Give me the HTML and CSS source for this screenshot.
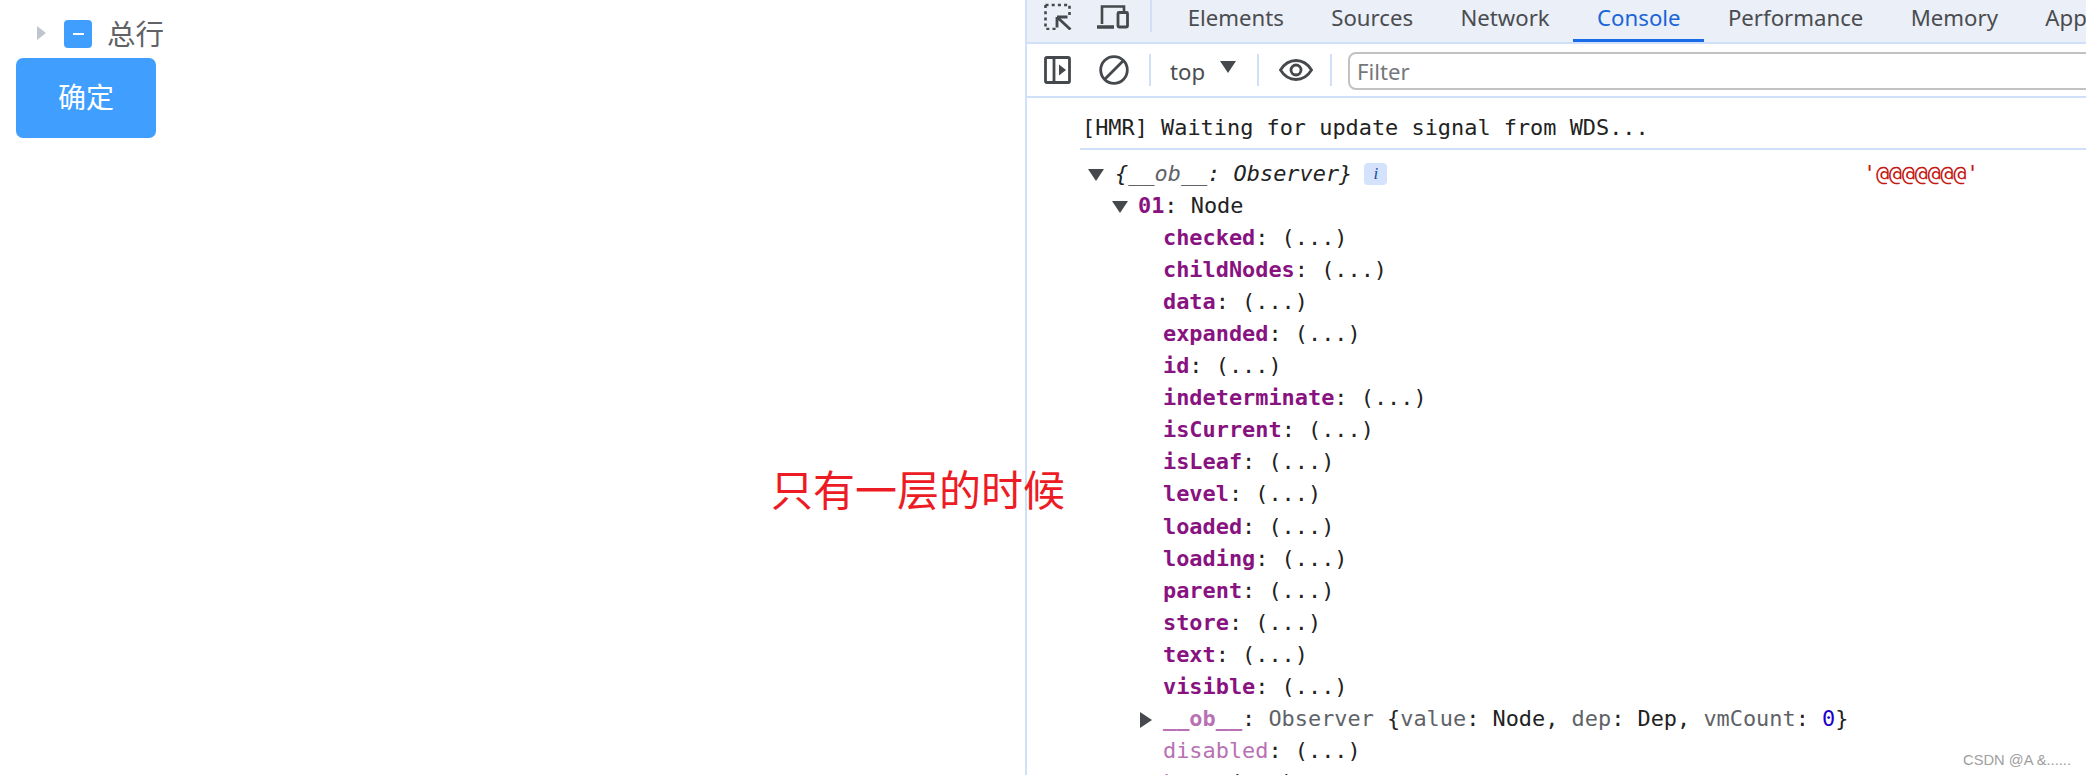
FILE: index.html
```html
<!DOCTYPE html>
<html lang="zh">
<head>
<meta charset="utf-8">
<title>Tree</title>
<link rel="stylesheet" href="styles.css">
</head>
<body>
<main class="app">
  <section class="page">
    <div class="tree-node">
      <span class="caret"></span>
      <span class="checkbox"><span class="dash"></span></span>
      <span class="tree-label">总行</span>
    </div>
    <button class="confirm">确定</button>
  </section>
  <section class="devtools">
    <nav class="tabs">
      <span class="icon-btn first">
        <svg width="28" height="28" viewBox="0 0 28 28"><rect x="1.5" y="3" width="24" height="24" fill="none" stroke="#45484c" stroke-width="2.6" stroke-dasharray="3 3.2"/><path d="M13 13h15v15h-15z" fill="#ebeff7"/><path d="M13 15h10.500M13 15v10.500M13.500 15.500l13 12" fill="none" stroke="#45484c" stroke-width="2.8"/></svg>
      </span>
      <span class="icon-btn second">
        <svg width="32" height="26" viewBox="0 0 32 26"><path d="M5 21V3.500h22V8" fill="none" stroke="#45484c" stroke-width="2.600"/><path d="M0 24h17" stroke="#45484c" stroke-width="3.500"/><rect x="21" y="9.500" width="9.500" height="14.500" rx="1" fill="none" stroke="#45484c" stroke-width="2.800"/></svg>
      </span>
      <span class="sep tab-sep"></span>
      <a class="tab">Elements</a>
      <a class="tab">Sources</a>
      <a class="tab">Network</a>
      <a class="tab active">Console</a>
      <a class="tab">Performance</a>
      <a class="tab">Memory</a>
      <a class="tab">Application</a>
    </nav>
    <div class="toolbar">
      <span class="icon-btn first">
        <svg width="28" height="28" viewBox="0 0 28 28"><rect x="1.500" y="1.500" width="24" height="25" rx="1.500" fill="none" stroke="#45484c" stroke-width="2.800"/><path d="M10 2v24" stroke="#45484c" stroke-width="2.800"/><path d="M15 8.500l7 5.500-7 5.500z" fill="#45484c"/></svg>
      </span>
      <span class="icon-btn second clear">
        <svg width="30" height="30" viewBox="0 0 30 30"><circle cx="15" cy="15" r="13.300" fill="none" stroke="#45484c" stroke-width="2.800"/><path d="M24.500 5.500l-19 19" stroke="#45484c" stroke-width="2.800"/></svg>
      </span>
      <span class="sep bar-sep"></span>
      <span class="context">top</span>
      <span class="ctx-caret"></span>
      <span class="sep ctx-sep"></span>
      <span class="eye">
        <svg width="34" height="22" viewBox="0 0 34 22"><path d="M1.500 11C5.500 4.500 11 1.500 17 1.500S28.500 4.500 32.500 11C28.500 17.500 23 20.500 17 20.500S5.500 17.500 1.500 11z" fill="none" stroke="#45484c" stroke-width="2.800"/><circle cx="17" cy="11" r="5" fill="none" stroke="#45484c" stroke-width="2.800"/></svg>
      </span>
      <span class="sep eye-sep"></span>
      <div class="filter">Filter</div>
    </div>
    <div class="console">
      <div class="message">[HMR] Waiting for update signal from WDS...</div>
      <div class="row log-head">
        <span class="arrow down"></span>
        <span class="obj"><i>{<span class="dim">__ob__</span>: Observer}</i></span>
        <span class="info">i</span>
        <span class="str">'@@@@@@@'</span>
      </div>
      <div class="row lvl1"><span class="arrow down"></span><b class="key">01</b>: Node</div>
      <div class="row lvl2"><b class="key">checked</b>: (...)</div>
      <div class="row lvl2"><b class="key">childNodes</b>: (...)</div>
      <div class="row lvl2"><b class="key">data</b>: (...)</div>
      <div class="row lvl2"><b class="key">expanded</b>: (...)</div>
      <div class="row lvl2"><b class="key">id</b>: (...)</div>
      <div class="row lvl2"><b class="key">indeterminate</b>: (...)</div>
      <div class="row lvl2"><b class="key">isCurrent</b>: (...)</div>
      <div class="row lvl2"><b class="key">isLeaf</b>: (...)</div>
      <div class="row lvl2"><b class="key">level</b>: (...)</div>
      <div class="row lvl2"><b class="key">loaded</b>: (...)</div>
      <div class="row lvl2"><b class="key">loading</b>: (...)</div>
      <div class="row lvl2"><b class="key">parent</b>: (...)</div>
      <div class="row lvl2"><b class="key">store</b>: (...)</div>
      <div class="row lvl2"><b class="key">text</b>: (...)</div>
      <div class="row lvl2"><b class="key">visible</b>: (...)</div>
      <div class="row lvl2 has-arrow"><span class="arrow right"></span><b class="key faded">__ob__</b>: <span class="gray">Observer</span> {<span class="gray">value</span>: Node, <span class="gray">dep</span>: Dep, <span class="gray">vmCount</span>: <span class="num">0</span>}</div>
      <div class="row lvl2"><span class="key faded">disabled</span>: (...)</div>
      <div class="row lvl2"><span class="key faded">key</span>: (...)</div>
    </div>
  </section>
  <div class="note">只有一层的时候</div>
  <div class="watermark">CSDN @A &amp;......</div>
</main>
</body>
</html>
```

FILE: styles.css
```css
* { box-sizing: border-box; }
html, body { margin: 0; height: 100%; overflow: hidden; background: #fff; }
.app { position: relative; display: flex; width: 2086px; height: 775px; overflow: hidden; }

.page { width: 1025px; flex: none; padding: 20px 0 0 16px; font-family: "Noto Sans CJK SC", sans-serif; }
.tree-node { display: flex; align-items: center; height: 28px; margin-left: 21px; }
.caret { width: 0; height: 0; border-style: solid; border-width: 7.500px 0 7.500px 9.500px; border-color: transparent transparent transparent #c0c4cc; margin-top: -2px; }
.checkbox { display: flex; align-items: center; justify-content: center; width: 28px; height: 28px; margin-left: 18px; background: #409eff; border-radius: 4px; }
.dash { width: 11px; height: 2px; background: #fff; }
.tree-label { margin: -2px 0 0 15px; font-size: 28.500px; line-height: 28px; color: #606266; }
.confirm { display: block; width: 140px; height: 80px; margin-top: 10px; padding: 0 0 4px; border: 0; border-radius: 7px; background: #409eff; color: #fff; font: 28px "Noto Sans CJK SC", sans-serif; }

.devtools { flex: 1; min-width: 0; display: flex; flex-direction: column; border-left: 2px solid #d0e0f8; }
.tabs { display: flex; align-items: center; height: 44px; flex: none; background: #ebeff7; border-bottom: 2px solid #d0e0f8; overflow: hidden; white-space: nowrap; font-family: "Noto Sans", sans-serif; font-size: 22.200px; color: #4a4c50; }
.icon-btn { display: flex; flex: none; }
.first { margin-left: 17px; }
.second { margin-left: 25px; }
.tabs .first { margin-top: -10px; }
.tabs .second { margin-top: -10px; }
.sep { flex: none; width: 2px; background: #d0e0f8; }
.tab-sep { height: 32px; margin: -10px 0 0 21px; }
.tab { display: flex; align-items: center; height: 42px; padding: 0 23.700px 8px; }
.tab-sep + .tab { margin-left: 12px; }
.tab.active { color: #1a65d8; box-shadow: inset 0 -3px 0 #1a6be8; }

.toolbar { display: flex; align-items: center; height: 54px; flex: none; border-bottom: 2px solid #d0e0f8; font-family: "Noto Sans", sans-serif; font-size: 22.200px; color: #4a4c50; overflow: hidden; }
.clear { margin-left: 27px; }
.bar-sep { height: 32px; margin-left: 20px; }
.context { margin: 2px 0 0 19px; }
.ctx-caret { width: 0; height: 0; margin: -6px 0 0 15px; border-style: solid; border-width: 12px 8px 0; border-color: #45484c transparent transparent; }
.ctx-sep { height: 32px; margin-left: 21px; }
.eye { display: flex; margin-left: 20px; }
.eye-sep { height: 32px; margin-left: 17px; }
.filter { flex: none; width: 800px; height: 38px; margin: 2px 0 0 16px; padding-left: 7px; border: 2px solid #c2c2c2; border-radius: 8px; line-height: 36px; color: #75777b; }

.console { font-family: "DejaVu Sans Mono", monospace; font-size: 21.900px; line-height: 32px; color: #222; }
.message { height: 52px; margin-left: 53px; padding: 14px 0 0 2px; border-bottom: 2px solid #d0e0f8; line-height: 32px; }
.row { position: relative; height: 32.050px; white-space: nowrap; }
.log-head { display: flex; align-items: center; margin-top: 8px; padding-left: 88px; }
.dim { color: #5f6368; }
.info { display: flex; align-items: center; justify-content: center; width: 23px; height: 22px; margin-left: 12px; border-radius: 4px; background: #d4e3fb; font: italic 17px "Liberation Serif", serif; color: #1a4d9a; }
.str { position: absolute; left: 836px; color: #c41a16; letter-spacing: -.300px; }
.lvl1 { padding-left: 111px; }
.lvl2 { padding-left: 136px; }
.key { color: #881280; }
.faded { color: #b871b3; }
.gray { color: #5f6368; }
.num { color: #1c00cf; }
.arrow { position: absolute; width: 0; height: 0; border-style: solid; }
.arrow.down { top: 11px; border-width: 12px 8px 0; border-color: #45484c transparent transparent; }
.arrow.right { left: 113px; top: 9px; border-width: 8px 0 8px 12px; border-color: transparent transparent transparent #45484c; }
.log-head .arrow.down { left: 61px; top: 11px; }
.lvl1 .arrow.down { left: 85px; }

.note { position: absolute; left: 771px; top: 460px; font: 42px/56px "Noto Sans CJK SC", sans-serif; color: #ed1c24; white-space: nowrap; }
.watermark { position: absolute; right: 15px; bottom: 6px; font: 14.700px/18px "Liberation Sans", sans-serif; color: #a0a0a0; white-space: nowrap; }
```
